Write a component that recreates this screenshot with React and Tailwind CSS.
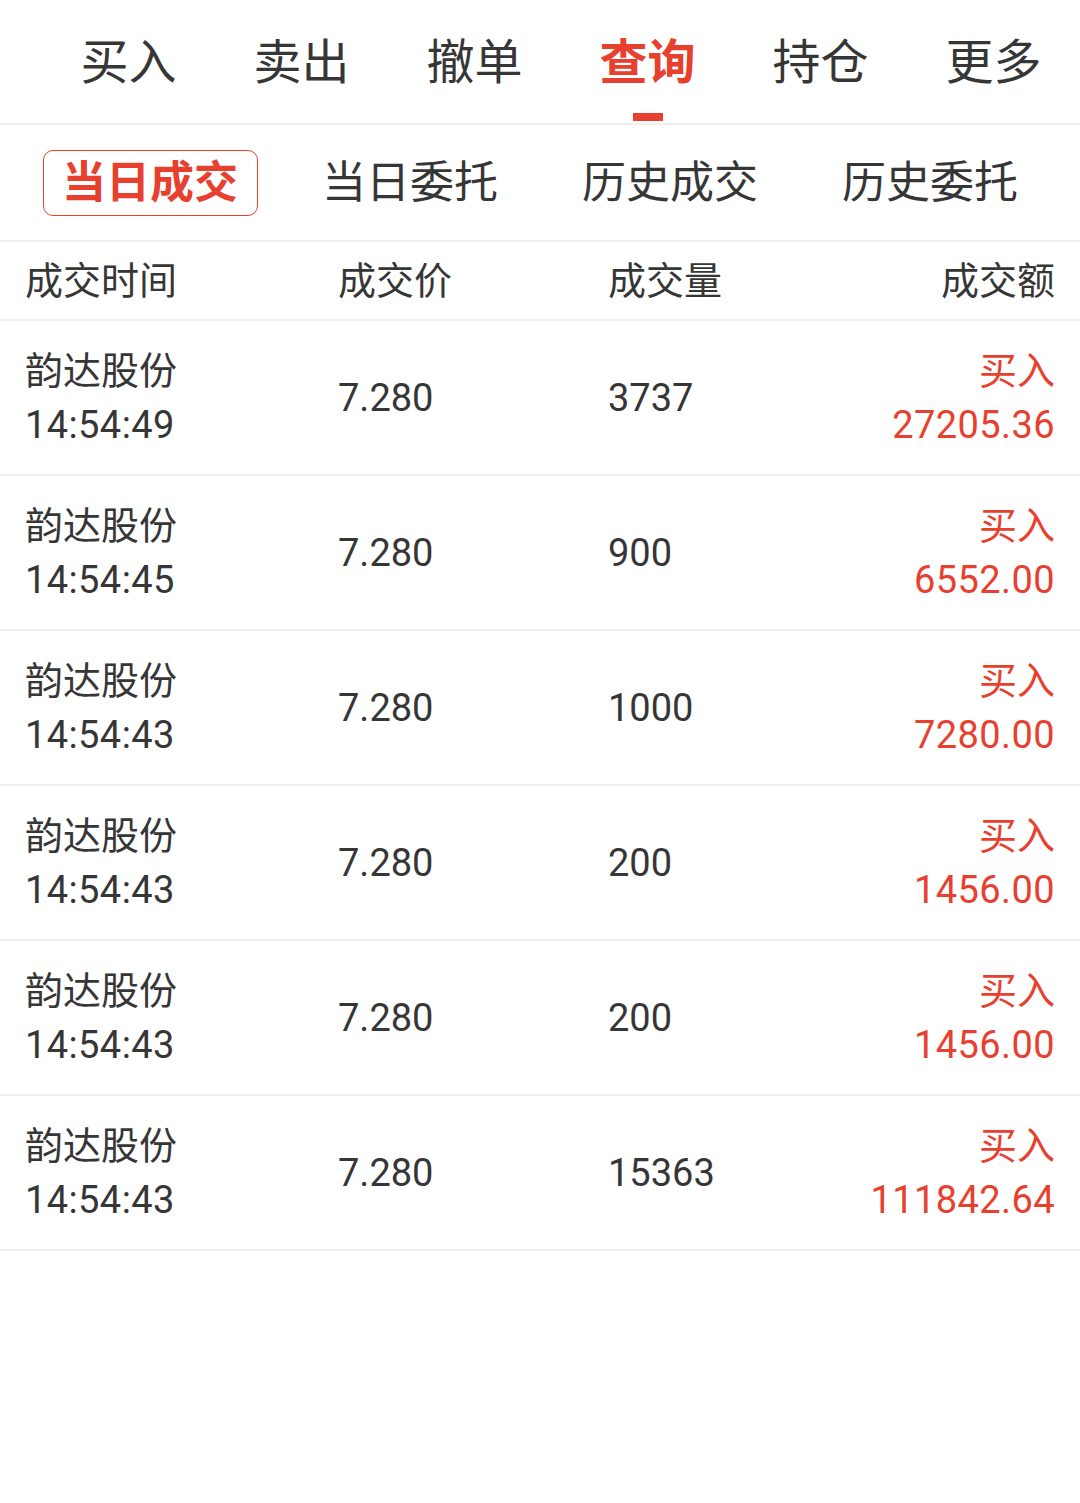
import React from "react";

const font = { fontFamily: 'Roboto, "Noto Sans CJK SC", sans-serif' };

const topTabs = ["买入", "卖出", "撤单", "查询", "持仓", "更多"];
const subTabs = ["当日成交", "当日委托", "历史成交", "历史委托"];
const rows = [
  { time: "14:54:49", qty: "3737", amt: "27205.36" },
  { time: "14:54:45", qty: "900", amt: "6552.00" },
  { time: "14:54:43", qty: "1000", amt: "7280.00" },
  { time: "14:54:43", qty: "200", amt: "1456.00" },
  { time: "14:54:43", qty: "200", amt: "1456.00" },
  { time: "14:54:43", qty: "15363", amt: "111842.64" },
];

export default function App() {
  return (
    <div
      className="w-[1080px] min-h-[1503px] bg-white text-[#363636]"
      style={font}
    >
      {/* top tabs */}
      <div className="flex h-[125px] border-b-2 border-[#eeeeee] pl-[42px]">
        {topTabs.map((t, i) => (
          <div
            key={t}
            className="relative flex flex-1 items-center justify-center"
          >
            <span
              className={
                "mt-[3px] text-[48px] leading-none " +
                (i === 3 ? "font-bold text-[#e8402f]" : "text-[#363636]")
              }
            >
              {t}
            </span>
            {i === 3 && (
              <span className="absolute bottom-[2px] left-1/2 h-[8px] w-[30px] -translate-x-1/2 bg-[#e8402f]" />
            )}
          </div>
        ))}
      </div>

      {/* sub tabs */}
      <div className="grid h-[117px] grid-cols-4 border-b-2 border-[#eeeeee] px-[20px]">
        {subTabs.map((t, i) => (
          <div key={t} className="flex items-center justify-center">
            {i === 0 ? (
              <span className="flex h-[66px] w-[215px] items-center justify-center rounded-[10px] border border-[#e8402f] text-[44px] font-bold leading-none text-[#e8402f]">
                {t}
              </span>
            ) : (
              <span className="text-[44px] leading-none text-[#363636]">
                {t}
              </span>
            )}
          </div>
        ))}
      </div>

      {/* header */}
      <div className="grid h-[79px] grid-cols-[313px_270px_1fr_auto] items-center border-b-2 border-[#eeeeee] px-[25px] text-[38px] leading-none">
        <span>成交时间</span>
        <span>成交价</span>
        <span>成交量</span>
        <span className="text-right">成交额</span>
      </div>

      {/* rows */}
      {rows.map((r, idx) => (
        <div
          key={idx}
          className="grid h-[155px] grid-cols-[313px_270px_1fr_auto] items-center border-b-2 border-[#eeeeee] px-[25px] text-[38px] leading-[54px]"
        >
          <div className="flex flex-col">
            <span>韵达股份</span>
            <span className="tracking-[0.4px]">{r.time}</span>
          </div>
          <span>7.280</span>
          <span>{r.qty}</span>
          <div className="flex flex-col items-end text-[#e8402f]">
            <span>买入</span>
            <span className="tracking-[0.4px]">{r.amt}</span>
          </div>
        </div>
      ))}
    </div>
  );
}
